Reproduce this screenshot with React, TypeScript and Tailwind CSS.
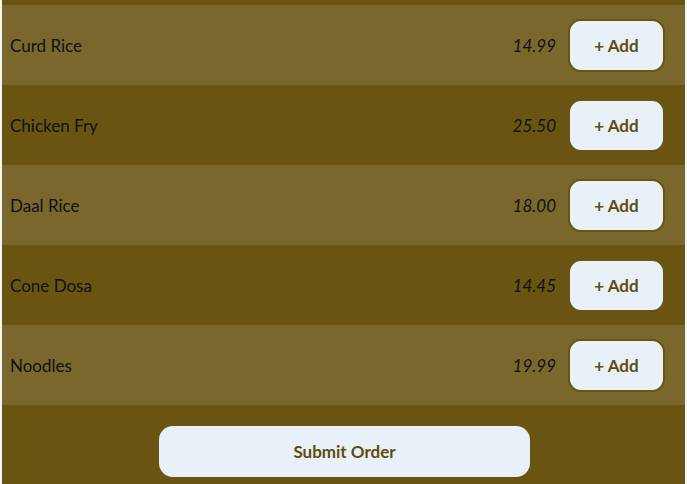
const items = [
  { name: "Curd Rice", price: "14.99" },
  { name: "Chicken Fry", price: "25.50" },
  { name: "Daal Rice", price: "18.00" },
  { name: "Cone Dosa", price: "14.45" },
  { name: "Noodles", price: "19.99" },
];

export default function App() {
  return (
    <main className="min-h-screen bg-[#f3f4f6] px-[2px] font-['Lato',sans-serif] overflow-hidden h-[484px]">
      <div className="bg-[#695412] pt-[5px] pb-[20px]">
        {items.map((item, i) => (
          <div
            key={item.name}
            className={`flex items-center h-[80px] pl-[8px] pr-[20px] pt-[1px] ${i % 2 === 0 ? "bg-[#79672b]" : "bg-[#695412]"}`}
          >
            <span className="flex-1 text-[17px] text-[#111]">{item.name}</span>
            <span className="text-[17px] italic text-[#111] mr-[12px]">{item.price}</span>
            <button
              type="button"
              className="w-[97px] h-[53px] rounded-[13px] bg-[#e8f0f8] border-2 border-[#695412] text-[17px] font-bold text-[#5e4d10]"
            >
              + Add
            </button>
          </div>
        ))}
        <div className="flex justify-center pt-[21px]">
          <button
            type="button"
            className="w-[371px] h-[51px] rounded-[14px] bg-[#e8f0f8] text-[17px] font-bold text-[#5e4d10] ml-[2px]"
          >
            Submit Order
          </button>
        </div>
      </div>
    </main>
  );
}
